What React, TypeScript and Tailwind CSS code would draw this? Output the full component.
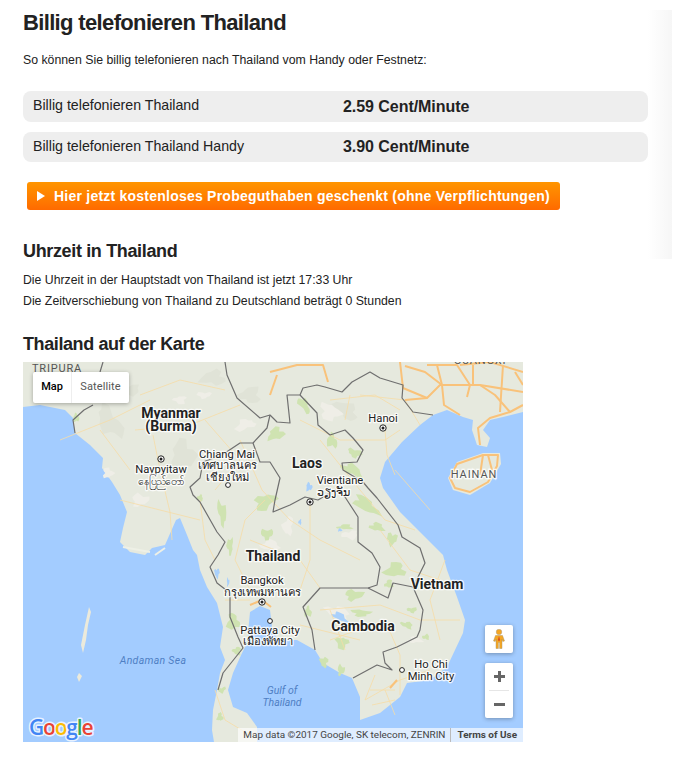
import React from 'react'

const land =
  'M23 362 L23 407 L40 405 L65 410 L73 418 L75 433 L90 445 L103 458 L102 468 L112 482 L120 495 L127 512 L123 528 L120 542 L130 552 L145 555 L152 548 L165 545 L176 520 L180 518 L187 535 L193 550 L197 555 L200 570 L207 587 L217 603 L223 627 L220 647 L225 660 L220 673 L217 690 L213 710 L212 730 L214 742 L257 742 L257 727 L247 713 L233 707 L228 690 L233 673 L242 653 L247 643 L250 612 L260 606 L270 610 L272 627 L277 640 L297 640 L315 650 L323 663 L340 673 L352 678 L360 697 L360 720 L380 713 L400 697 L407 683 L430 680 L447 667 L463 633 L465 620 L457 597 L447 570 L443 555 L420 532 L400 512 L383 488 L380 478 L385 462 L402 442 L420 425 L433 415 L447 410 L463 417 L473 420 L472 430 L477 445 L487 447 L490 438 L483 430 L490 420 L503 417 L523 412 L523 362 Z'

const hainan = 'M448 478 L457 462 L483 453 L500 453 L501 464 L490 483 L470 495 L453 490 Z'

const borders = [
  'M225 362 L227 375 L237 398 L260 418 L270 415 L277 422 L290 423 L287 395 L300 395 L317 413 L318 425 L330 435 L345 430 L353 438 L363 450 L357 462 L342 463 L343 470 L363 482 L368 488 L377 498 L398 525 L402 537 L420 548 L425 563 L413 587 L423 610 L420 630 L417 637 L397 647 L383 652 L385 663 L392 670 L377 665 L353 678',
  'M300 395 L303 388 L317 385 L325 387 L342 392 L352 382 L370 372 L380 378 L403 385 L402 398 L413 412 L433 415',
  'M270 415 L267 428 L253 443 L240 443 L222 455 L203 462 L200 478 L190 487 L193 495 L200 502 L217 532 L225 542 L218 555 L210 567 L217 583 L230 593 L230 617 L238 637 L243 648 L223 673 L218 690',
  'M253 443 L260 462 L270 462 L280 478 L275 500 L273 512 L290 505 L305 497 L318 500 L335 490 L345 497 L358 517 L358 542 L372 553 L380 567 L377 585 L368 588 L320 588 L303 607 L312 630 L315 650',
  'M368 588 L388 598 L393 583 L413 587',
  'M103 362 L100 372 M93 405 L84 410 L73 420 L75 433',
]

const motorways = [
  'M400 362 L403 388 L427 398 L440 385 L480 385 L523 392',
  'M437 365 L442 385 L444 405 L460 415',
  'M427 365 L457 365 L470 385 L467 397',
  'M473 365 L473 385',
  'M503 365 L500 412',
  'M405 400 L427 398',
  'M515 372 L523 385',
  'M270 372 L297 365 L323 365 L328 382',
  'M277 375 L270 395',
  'M480 445 L478 428 L490 418 L510 412 L523 405',
  'M450 478 L457 464 L483 455 L498 455 L497 466 L488 482 L470 492 L455 488 Z',
  'M483 455 L480 475 M488 455 L492 470',
  'M250 605 L262 600 L271 607',
  'M397 680 L390 688',
  'M442 385 L425 372 L405 366',
  'M480 385 L495 395 L510 412',
  'M460 365 L490 362 L523 372',
]

const roads = [
  'M153 435 L160 470 L170 512 L172 540',
  'M200 500 L205 540 L215 560',
  'M135 430 L190 425 L240 405',
  'M140 395 L180 380 L225 390',
  'M130 470 L100 430',
  'M120 500 L160 510 L200 520',
  'M240 440 L262 490 L290 520 L320 540 L360 560',
  'M300 420 L340 440 L385 440 L400 430',
  'M320 440 L360 490 L385 520 L415 530',
  'M385 430 L387 455 L395 475',
  'M310 505 L310 560 L300 590',
  'M250 540 L300 560 L320 588',
  'M225 600 L250 600',
  'M320 610 L380 605 L420 620 L460 620',
  'M330 640 L385 620 L400 655 L400 695',
  'M365 700 L400 680 L430 670',
  'M215 690 L225 720 L250 735',
  'M370 690 L395 690 M372 705 L395 700',
  'M420 425 L405 400 L360 395',
  'M445 560 L430 600 L440 640',
  'M250 590 L235 560 L245 520 L265 500',
  'M330 400 L375 395 L400 410',
  'M395 470 L430 510',
  'M350 395 L345 420',
  'M60 440 L110 420 L150 400',
  'M205 420 L240 460 L215 490',
  'M380 530 L410 570 L440 580',
  'M330 610 L345 650 M300 625 L360 640',
  'M385 690 L395 715 M375 675 L365 700',
]

// cx, cy, rx, ry, rotation
const green: number[][] = [
  [304, 405, 4, 9, -35],
  [276, 434, 8, 6, -20],
  [332, 441, 5, 7, -15],
  [355, 453, 7, 4, 15],
  [352, 470, 11, 5, 25],
  [366, 505, 14, 6, 35],
  [377, 527, 7, 4, 10],
  [392, 539, 5, 6, 0],
  [345, 527, 7, 2.5, 0],
  [265, 502, 11, 7, -30],
  [222, 513, 4, 12, -10],
  [230, 546, 3, 8, 0],
  [267, 534, 6, 5, 0],
  [200, 498, 3, 3, 0],
  [233, 622, 6, 8, 0],
  [237, 651, 4, 4, 0],
  [222, 690, 4, 2.5, -30],
  [220, 717, 3, 4, 0],
  [354, 595, 9, 5, 0],
  [361, 613, 9, 3.5, 5],
  [342, 643, 6, 6, 0],
  [407, 625, 6, 3, 15],
  [412, 610, 5, 2.5, 0],
  [395, 570, 10, 7, -10],
  [389, 584, 4, 4, 0],
  [324, 662, 4, 5, 0],
  [341, 670, 3.5, 5, 0],
  [426, 637, 3.5, 2.5, 0],
  [308, 612, 3.5, 5, 0],
  [76, 418, 3, 4, 0],
]

const pale: number[][] = [
  [338, 613, 12, 6, 20],
  [204, 395, 7, 3, 0],
  [108, 473, 5, 5, 0],
  [288, 526, 5, 9, 10],
  [330, 412, 10, 8, 30],
  [245, 425, 10, 5, -20],
  [270, 545, 9, 5, 0],
  [70, 388, 8, 6, 0],
  [415, 640, 7, 3, 0],
  [140, 500, 8, 6, 0],
  [350, 535, 8, 4, 0],
  [180, 400, 6, 4, 0],
]

const terrain: number[][] = [
  [110, 422, 18, 9, 55],
  [213, 378, 12, 7, 0],
  [345, 410, 14, 7, 30],
  [183, 455, 12, 14, 0],
  [130, 390, 10, 5, 0],
  [250, 395, 10, 8, 0],
]

const water: number[][] = [
  [340, 617, 8, 3.5, 30],
  [217, 573, 2.5, 4.5, 0],
  [228, 582, 1.2, 4, 0],
  [309, 487, 3, 4, 0],
  [300, 522, 1.5, 2.5, 0],
  [340, 530, 2, 1.5, 0],
]

// uneven outline, so the land cover patches don't read as plain ovals
const blobPath = ([cx, cy, rx, ry, rot]: number[]) => {
  const pts: string[] = []
  const turn = (rot * Math.PI) / 180
  for (let i = 0; i < 14; i++) {
    const a = (i / 14) * Math.PI * 2
    const k = 1 + 0.28 * Math.sin(3 * a + cx) + 0.2 * Math.sin(5 * a + cy)
    const px = Math.cos(a) * rx * k
    const py = Math.sin(a) * ry * k
    pts.push(`${(cx + px * Math.cos(turn) - py * Math.sin(turn)).toFixed(1)} ${(cy + px * Math.sin(turn) + py * Math.cos(turn)).toFixed(1)}`)
  }
  return `M${pts.join(' L')} Z`
}

const Blobs = ({ items, fill }: { items: number[][]; fill: string }) => (
  <g fill={fill} className="blur-[0.5px]">
    {items.map((item) => (
      <path key={`${item[0]}-${item[1]}`} d={blobPath(item)} />
    ))}
  </g>
)

const labelClass = 'fill-[#222] [paint-order:stroke] stroke-white/80 stroke-[2.5px] [stroke-linejoin:round]'

const MapLabel = ({ x, y, children, bold, size = 11.2 }: { x: number; y: number; children: string; bold?: boolean; size?: number }) => (
  <text x={x} y={y} textAnchor="middle" fontSize={size} fontWeight={bold ? 700 : 400} className={labelClass}>
    {children}
  </text>
)

const CityDot = ({ x, y, capital }: { x: number; y: number; capital?: boolean }) => (
  <g>
    <circle cx={x} cy={y} r={capital ? 3.2 : 2.4} fill="#fff" stroke="#222" strokeWidth="1" />
    {capital && <circle cx={x} cy={y} r="1.5" fill="#222" />}
  </g>
)

const MapDrawing = () => (
  <svg viewBox="23 362 500 380" width="500" height="380" className="block font-['Roboto',sans-serif]">
    <rect x="23" y="362" width="500" height="380" fill="#a3ccff" />
    <path d={land} fill="#e6e9de" strokeLinejoin="round" />
    <path d={hainan} fill="#e6e9de" />
    <path d="M89 607 L91 612 L88 625 L86 640 L83 653 L81 645 L85 625 Z M79 673 L82 676 L79 682 L77 677 Z" fill="#eceadb" />
    <path d="M123 547 L150 552 M165 548 L155 555" stroke="#eef0e6" strokeWidth="2" fill="none" />
    <Blobs items={terrain} fill="#e0e3d7" />
    <Blobs items={pale} fill="#efeee7" />
    <Blobs items={green} fill="#cfe3b1" />
    <Blobs items={water} fill="#a9d0fb" />
    <g fill="none" stroke="#f6dca6" strokeWidth="0.8">
      {roads.map((d) => (
        <path key={d} d={d} />
      ))}
    </g>
    <g fill="none" stroke="#f9c27a" strokeWidth="2" strokeLinejoin="round">
      {motorways.map((d) => (
        <path key={d} d={d} />
      ))}
    </g>
    <g fill="none" stroke="#6f6f6f" strokeWidth="1.2" strokeLinejoin="round">
      {borders.map((d) => (
        <path key={d} d={d} />
      ))}
    </g>

    <CityDot x={161} y={459} capital />
    <CityDot x={228} y={485} />
    <CityDot x={383} y={428} capital />
    <CityDot x={310} y={502} capital />
    <CityDot x={262} y={602} capital />
    <CityDot x={270} y={621} />
    <CityDot x={402} y={670} />

    <text x="32" y="372" fontSize="11" letterSpacing="0.8" className="fill-[#555]">TRIPURA</text>
    <text x="480" y="364" fontSize="11" letterSpacing="0.8" textAnchor="middle" className="fill-[#555]">GUANGXI</text>
    <MapLabel x={171} y={418} bold size={14}>Myanmar</MapLabel>
    <MapLabel x={171} y={431} bold size={14}>(Burma)</MapLabel>
    <MapLabel x={161} y={473}>Naypyitaw</MapLabel>
    <MapLabel x={161} y={485} size={10.5}>နေပြည်တော်</MapLabel>
    <MapLabel x={227} y={458}>Chiang Mai</MapLabel>
    <MapLabel x={227} y={469}>เทศบาลนคร</MapLabel>
    <MapLabel x={227} y={481}>เชียงใหม่</MapLabel>
    <MapLabel x={307} y={468} bold size={14}>Laos</MapLabel>
    <MapLabel x={340} y={484}>Vientiane</MapLabel>
    <MapLabel x={333} y={496}>ວຽງຈັນ</MapLabel>
    <MapLabel x={383} y={422}>Hanoi</MapLabel>
    <text x="474" y="478" textAnchor="middle" fontSize="11" letterSpacing="0.9" className="fill-[#555] [paint-order:stroke] stroke-white/80 stroke-[2.5px]">HAINAN</text>
    <MapLabel x={273} y={561} bold size={14}>Thailand</MapLabel>
    <MapLabel x={262} y={584}>Bangkok</MapLabel>
    <MapLabel x={262} y={596}>กรุงเทพมหานคร</MapLabel>
    <MapLabel x={270} y={634}>Pattaya City</MapLabel>
    <MapLabel x={268} y={645}>เมืองพัทยา</MapLabel>
    <MapLabel x={363} y={631} bold size={14}>Cambodia</MapLabel>
    <MapLabel x={437} y={589} bold size={14}>Vietnam</MapLabel>
    <MapLabel x={431} y={668}>Ho Chi</MapLabel>
    <MapLabel x={431} y={680}>Minh City</MapLabel>
    <text x="153" y="664" textAnchor="middle" fontSize="10.5" fontStyle="italic" letterSpacing="0.3" fill="#4f7fc4">Andaman Sea</text>
    <text x="282" y="694" textAnchor="middle" fontSize="10.5" fontStyle="italic" fill="#4f7fc4">Gulf of</text>
    <text x="282" y="706" textAnchor="middle" fontSize="10.5" fontStyle="italic" fill="#4f7fc4">Thailand</text>

    <text x="29" y="735" fontSize="21" fontWeight="600" className="font-['Open_Sans',sans-serif] [paint-order:stroke] stroke-white/75 stroke-[3px] [stroke-linejoin:round]" letterSpacing="-1.2">
      <tspan fill="#4285f4">G</tspan>
      <tspan fill="#ea4335">o</tspan>
      <tspan fill="#fbbc05">o</tspan>
      <tspan fill="#4285f4">g</tspan>
      <tspan fill="#34a853">l</tspan>
      <tspan fill="#ea4335">e</tspan>
    </text>
  </svg>
)

const PegmanIcon = () => (
  <svg width="16" height="20" viewBox="0 0 16 20">
    <circle cx="8" cy="3" r="2.8" fill="#f5a623" stroke="#9a9a9a" strokeWidth="0.4" />
    <path d="M4.5 6.5 H11.5 L13.5 12 L11.8 12.5 L11 10 V19.5 H8.6 V13.5 H7.4 V19.5 H5 V10 L4.2 12.5 L2.5 12 Z" fill="#f5a623" stroke="#9a8a60" strokeWidth="0.4" />
    <path d="M8 7 L9.2 11 L8 12.5 L6.8 11 Z" fill="#d9541e" />
  </svg>
)

const PriceRow = ({ label, price, className, labelClassName }: { label: string; price: string; className: string; labelClassName?: string }) => (
  <div className={`flex items-center rounded-lg bg-[#eeeeee] pl-[10px] ${className}`}>
    <span className={`w-[310px] text-[14.2px] ${labelClassName ?? ''}`}>{label}</span>
    <span className="text-[16px] font-bold tracking-[-0.05px]">{price}</span>
  </div>
)

export default function App() {
  return (
    <div className="min-h-[777px] bg-white text-[#222] font-['Liberation_Sans',Arial,sans-serif]">
      <div className="flex items-start">
        <div className="ml-[23px] w-[625px] shrink-0">
          <h1 className="pt-[10px] text-[22px] leading-[26px] font-bold tracking-[-0.65px]">Billig telefonieren Thailand</h1>
          <p className="mt-[16px] text-[12.3px] leading-[16px]">So können Sie billig telefonieren nach Thailand vom Handy oder Festnetz:</p>
          <div className="mt-[23px]">
            <PriceRow label="Billig telefonieren Thailand" price="2.59 Cent/Minute" className="h-[31px]" labelClassName="-translate-y-px" />
            <PriceRow label="Billig telefonieren Thailand Handy" price="3.90 Cent/Minute" className="mt-[10px] h-[30px]" />
          </div>
          <a className="ml-[4px] mt-[20px] flex h-[28px] w-[533px] items-center rounded-[3px] bg-gradient-to-b from-[#ff9500] to-[#ff6a00] pl-[10px] text-[14px] font-bold tracking-[0.23px] text-white">
            <span className="mr-[9px] h-0 w-0 border-y-[5px] border-l-[8px] border-y-transparent border-l-white" />
            Hier jetzt kostenloses Probeguthaben geschenkt (ohne Verpflichtungen)
          </a>
          <h2 className="mt-[30px] text-[18px] leading-[22px] font-bold tracking-[-0.35px]">Uhrzeit in Thailand</h2>
        </div>
        <div className="mt-[10px] h-[249px] w-[24px] bg-gradient-to-r from-white to-[#f6f6f6]" />
      </div>
      <div className="px-[23px]">
        <p className="mt-[8px] text-[12.25px] leading-[21px]">Die Uhrzeit in der Hauptstadt von Thailand ist jetzt 17:33 Uhr</p>
        <p className="text-[12.3px] leading-[21px]">Die Zeitverschiebung von Thailand zu Deutschland beträgt 0 Stunden</p>
        <h2 className="mt-[21px] text-[18px] leading-[22px] font-bold tracking-[-0.4px]">Thailand auf der Karte</h2>
        <div className="relative mt-[7px] h-[380px] w-[500px] overflow-hidden font-['Roboto',sans-serif]">
          <MapDrawing />
          <div className="absolute left-[10px] top-[10px] flex h-[31px] rounded-[2px] bg-white text-[11px] shadow-[0_1px_4px_rgba(0,0,0,0.3)]">
            <span className="flex w-[38px] items-center justify-center font-medium text-black">Map</span>
            <span className="flex w-[58px] items-center justify-center border-l border-[#eee] tracking-[0.1px] text-[#565656]">Satellite</span>
          </div>
          <div className="absolute left-[462px] top-[263px] flex h-[28px] w-[28px] items-center justify-center rounded-[2px] bg-white shadow-[0_1px_4px_rgba(0,0,0,0.3)]">
            <PegmanIcon />
          </div>
          <div className="absolute left-[462px] top-[301px] flex h-[55px] w-[28px] flex-col items-center rounded-[2px] bg-white shadow-[0_1px_4px_rgba(0,0,0,0.3)]">
            <span className="flex h-[27px] w-full items-center justify-center">
              <span className="relative h-[11px] w-[11px] before:absolute before:left-0 before:top-[4px] before:h-[3px] before:w-[11px] before:bg-[#666] after:absolute after:left-[4px] after:top-0 after:h-[11px] after:w-[3px] after:bg-[#666]" />
            </span>
            <span className="h-px w-[20px] bg-[#e6e6e6]" />
            <span className="flex h-[27px] w-full items-center justify-center">
              <span className="h-[3px] w-[11px] bg-[#666]" />
            </span>
          </div>
          <div className="absolute bottom-0 right-0 flex h-[14px] items-center bg-white/65 text-[9.95px] text-[#444]">
            <span className="px-[5px]">Map data ©2017 Google, SK telecom, ZENRIN</span>
            <span className="border-l border-[#bbb] px-[6px] font-bold">Terms of Use</span>
          </div>
        </div>
      </div>
    </div>
  )
}
